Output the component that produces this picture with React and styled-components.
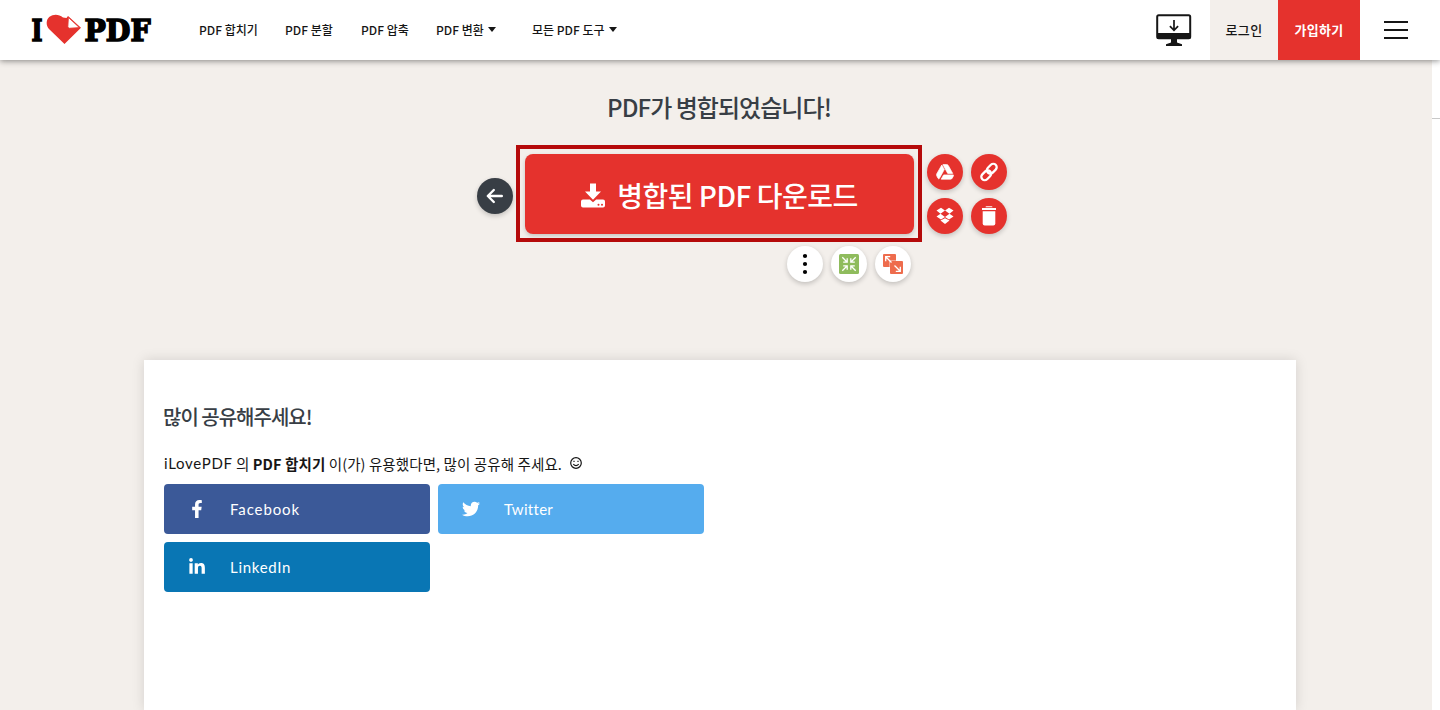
import styled, { createGlobalStyle } from "styled-components";
import { FaFacebookF, FaLinkedinIn, FaTwitter } from "react-icons/fa";

const GlobalStyle = createGlobalStyle`
  * {
    box-sizing: border-box;
  }
  body {
    margin: 0;
    background: #ffffff;
    color: #161616;
    font-family: "Noto Sans CJK KR", "Noto Sans", sans-serif;
    overflow: hidden;
  }
`;

const Page = styled.div`
  display: flex;
  flex-direction: column;
  height: 710px;
  overflow: hidden;
`;

const Header = styled.header`
  display: flex;
  align-items: center;
  flex: none;
  height: 60px;
  padding-left: 30px;
  background: #ffffff;
  box-shadow: 0 1px 6px rgba(0, 0, 0, 0.45);
  z-index: 2;
`;

const LogoSvg = styled.svg`
  flex: none;
  overflow: visible;
`;

const Nav = styled.nav`
  display: flex;
  margin-left: 43px;
`;

const NavItem = styled.a`
  display: flex;
  align-items: center;
  flex: none;
  width: ${(p) => p.$width}px;
  height: 60px;
  padding-bottom: 1px;
  font-size: 12px;
  font-weight: 500;
  white-space: nowrap;
`;

const Caret = styled.span`
  margin-left: 4px;
  border: 4.5px solid transparent;
  border-top: 5.5px solid #161616;
  border-bottom: 0;
`;

const HeaderActions = styled.div`
  display: flex;
  align-items: center;
  margin-left: auto;
`;

const AuthButton = styled.a`
  display: flex;
  align-items: center;
  justify-content: center;
  width: ${(p) => p.$width}px;
  height: 60px;
  padding-bottom: 1px;
  font-size: 13px;
  font-weight: ${(p) => (p.$primary ? 700 : 500)};
  letter-spacing: 0.3px;
  background: ${(p) => (p.$primary ? "#e5322d" : "#f3efeb")};
  color: ${(p) => (p.$primary ? "#ffffff" : "#161616")};
`;

const MenuButton = styled.div`
  display: flex;
  flex-direction: column;
  gap: 6px;
  margin: 0 32px 0 24px;
`;

const MenuLine = styled.span`
  width: 24px;
  height: 2px;
  background: #161616;
`;

const Body = styled.div`
  display: flex;
  flex: 1;
  min-height: 0;
`;

const Main = styled.main`
  display: flex;
  flex-direction: column;
  flex: 1;
  min-width: 0;
  background: #f3efeb;
`;

const SideStrip = styled.aside`
  flex: none;
  width: 8px;
  height: 59px;
  border-bottom: 1px solid #c8c8c8;
`;

const Title = styled.h1`
  margin: 27px 0 0;
  width: 1438px;
  height: 41px;
  line-height: 40px;
  font-size: 24px;
  font-weight: 500;
  letter-spacing: -0.95px;
  text-align: center;
  color: #383e45;
`;

const DownloadRow = styled.div`
  display: flex;
  margin: 17px 0 0 477px;
`;

const Circle = styled.span`
  display: flex;
  align-items: center;
  justify-content: center;
  flex: none;
  width: 36px;
  height: 36px;
  border-radius: 50%;
  background: ${(p) => p.$bg};
  color: #ffffff;
  box-shadow: 0 2px 5px rgba(0, 0, 0, 0.2);
`;

const BackSlot = styled.div`
  padding-top: 33px;
  margin-right: 3px;
`;

const Highlight = styled.div`
  width: 406px;
  height: 97px;
  padding: 5px;
  border: 4px solid #b50a0a;
`;

const DownloadButton = styled.a`
  display: flex;
  align-items: center;
  justify-content: center;
  gap: 12px;
  width: 389px;
  height: 80px;
  padding-top: 2px;
  border-radius: 8px;
  background: #e5322d;
  color: #ffffff;
  font-size: 28px;
  font-weight: 500;
  letter-spacing: -0.5px;
  white-space: nowrap;
  box-shadow: 0 2px 4px rgba(0, 0, 0, 0.18);
`;

const SaveOptions = styled.div`
  display: grid;
  grid-template-columns: 36px 36px;
  gap: 8px;
  align-content: start;
  margin: 9px 0 0 5px;
`;

const NextTools = styled.div`
  display: flex;
  gap: 8px;
  margin: 4px 0 0 787px;
`;

const SharePanel = styled.section`
  flex: 1;
  width: 1152px;
  margin: 78px 0 0 144px;
  padding: 41px 20px 0;
  background: #ffffff;
  box-shadow: 0 0 12px rgba(0, 0, 0, 0.13);
`;

const ShareTitle = styled.h2`
  margin: 0 0 0 -1px;
  height: 32px;
  line-height: 32px;
  font-size: 20px;
  font-weight: 500;
  letter-spacing: -1px;
  color: #383e45;
`;

const ShareText = styled.p`
  display: flex;
  align-items: center;
  margin: 18px 0 9px;
  height: 24px;
  font-size: 14.5px;
  letter-spacing: 0.1px;
  white-space: pre;

  svg {
    margin-left: 8px;
  }
`;

const Brand = styled.span`
  font-family: Lato, sans-serif;
  font-size: 15px;
  letter-spacing: 0.7px;
`;

const ShareGrid = styled.div`
  display: grid;
  grid-template-columns: 266px 266px;
  gap: 8px;
`;

const ShareButton = styled.a`
  display: flex;
  align-items: center;
  height: 50px;
  border-radius: 4px;
  background: ${(p) => p.$bg};
  color: #ffffff;
  font-family: Lato, sans-serif;
  font-size: 15px;
  letter-spacing: ${(p) => p.$spacing}px;
`;

const ShareIcon = styled.span`
  display: flex;
  justify-content: center;
  width: 66px;
`;

const Logo = () => (
  <LogoSvg width="126" height="34" viewBox="0 0 126 34">
    <g
      fontFamily="DejaVu Serif"
      fontWeight="700"
      fontSize="30"
      stroke="#000"
      strokeWidth="1.7"
    >
      <text x="1.500" y="27.500" textLength="11" lengthAdjust="spacingAndGlyphs">
        I
      </text>
      <text x="54.500" y="27.500" textLength="66" lengthAdjust="spacingAndGlyphs">
        PDF
      </text>
    </g>
    <path
      d="M34.500 31 19.500 16.500C15.500 12.500 16 6.500 19.500 3.700 23.500.8 29 1 33 4.500L36.500 5 38 3 51 14.800Z"
      fill="#e5322d"
    />
    <path
      d="M38.300 4.200 37.800 13.500Q37.700 15.300 39.500 15.300L49.500 14.700Z"
      fill="#fff"
      stroke="#e5322d"
      strokeWidth="1"
      strokeLinejoin="round"
    />
  </LogoSvg>
);

const DesktopSvg = styled.svg`
  margin-right: 18px;
`;

const DesktopIcon = () => (
  <DesktopSvg width="36" height="32" viewBox="0 0 36 32">
    <rect x="1.200" y="1.200" width="33" height="23" rx="1.500" fill="none" stroke="#161616" strokeWidth="2" />
    <path d="M1 19H34.500V23.500Q34.500 25 33 25H2.500Q1 25 1 23.500ZM15 25H21V28.500L26 30.200V32H10V30.200L15 28.500Z" fill="#161616" />
    <path d="M18 6V16.200M13.900 12.200 18 16.400 22.100 12.200" fill="none" stroke="#161616" strokeWidth="1.700" />
  </DesktopSvg>
);

const BackIcon = () => (
  <svg width="18" height="16" viewBox="0 0 18 16" fill="none" stroke="#fff" strokeWidth="2.400" strokeLinecap="round" strokeLinejoin="round">
    <path d="M15.800 8H2M7.800 2 1.800 8 7.800 14" />
  </svg>
);

const DownloadIcon = () => (
  <svg width="24" height="25" viewBox="0 0 24 25" fill="#fff">
    <path d="M9 .5H15V8.500H20L12 16.700 4 8.500H9Z" />
    <path d="M0 18.500Q0 16.500 2 16.500H8.800L12 19.300 15.200 16.500H22Q24 16.500 24 18.500V22.500Q24 24.500 22 24.500H2Q0 24.500 0 22.500Z" />
    <circle cx="17.500" cy="21.700" r="1" fill="#e5322d" />
    <circle cx="21" cy="21.700" r="1" fill="#e5322d" />
  </svg>
);

const DriveIcon = () => (
  <svg width="18" height="16" viewBox="0 0 18 16" fill="#fff" stroke="#fff" strokeWidth=".7" strokeLinejoin="round">
    <path d="M5.800 1 8.300 5.500 3.300 14.500Q2.600 15.200 2 14.300L.7 11.700Q.3 10.700.8 9.700Z" />
    <path d="M6.900.6H10.500Q11.800.6 12.300 1.500L16.700 9.400H11.700Z" />
    <path d="M7.600 10.900H17.400Q17.700 11.500 17.300 12.200L16.200 14.200Q15.700 15.200 14.500 15.200H5.200Z" />
  </svg>
);

const LinkIcon = () => (
  <svg width="20" height="20" viewBox="0 0 20 20" fill="none" stroke="#fff" strokeWidth="2.300">
    <rect x="7.300" y="3.300" width="11" height="6.800" rx="3.400" transform="rotate(-45 12.800 6.700)" />
    <rect x="1.700" y="9.900" width="11" height="6.800" rx="3.400" transform="rotate(-45 7.200 13.300)" />
  </svg>
);

const DropboxIcon = () => (
  <svg width="18" height="18" viewBox="0 0 18 18" fill="#fff">
    <path d="M5 .8 9 3.500 4.500 6.700.5 3.600ZM13 .8 17.500 3.600 13.500 6.700 9 3.500ZM4.500 6.700 9 10 5 12.500.5 9.600ZM13.500 6.700 17.500 9.600 13 12.500 9 10Z" />
    <path d="M4.500 13.500 9 11.200 13.500 13.500 9 17Z" />
  </svg>
);

const TrashIcon = () => (
  <svg width="16" height="20" viewBox="0 0 16 20" fill="#fff">
    <path d="M4.500 1.300Q4.500.3 5.500.3H10.500Q11.500.3 11.500 1.300ZM1 2H15V4H1Z" />
    <path d="M1.700 5.300H14.300V17.500Q14.300 19.500 12.300 19.500H3.700Q1.700 19.500 1.700 17.500Z" />
  </svg>
);

const MoreIcon = () => (
  <svg width="6" height="22" viewBox="0 0 6 22">
    <circle cx="3" cy="3" r="2.100" />
    <circle cx="3" cy="11" r="2.100" />
    <circle cx="3" cy="19" r="2.100" />
  </svg>
);

const CompressIcon = () => (
  <svg width="20" height="20" viewBox="0 0 20 20">
    <rect width="20" height="20" rx="1.500" fill="#8fbc5d" />
    <g fill="none" stroke="#fff" strokeWidth="1.300">
      <path d="M3.300 3.300 8 8M4.200 8.200H8.200V4.200" />
      <path d="M16.700 3.300 12 8M15.800 8.200H11.800V4.200" />
      <path d="M3.300 16.700 8 12M4.200 11.800H8.200V15.800" />
      <path d="M16.700 16.700 12 12M15.800 11.800H11.800V15.800" />
    </g>
  </svg>
);

const SplitIcon = () => (
  <svg width="20" height="20" viewBox="0 0 20 20">
    <path d="M1 0H12Q13 0 13 1V7H19Q20 7 20 8V19Q20 20 19 20H8Q7 20 7 19V13H1Q0 13 0 12V1Q0 0 1 0Z" fill="#ee6c4d" />
    <path d="M13 6.500H7.500Q6.500 6.500 6.500 7.500V13" fill="none" stroke="#fff" strokeWidth=".4" />
    <g fill="none" stroke="#fff" strokeWidth="1.300">
      <path d="M2.700 2.700 8.500 8.500M2.700 7.200V2.700H7.200" />
      <path d="M11.500 11.500 17.300 17.300M17.300 12.800V17.300H12.800" />
    </g>
  </svg>
);

const SmileIcon = () => (
  <svg width="12" height="12" viewBox="0 0 12 12" fill="none" stroke="#161616" strokeWidth="1.200">
    <circle cx="6" cy="6" r="5.300" />
    <path d="M3.300 7.200Q6 10 8.700 7.200" />
    <path d="M4 3.700V5M8 3.700V5" />
  </svg>
);

const navItems = [
  { label: "PDF 합치기", width: 86 },
  { label: "PDF 분할", width: 76 },
  { label: "PDF 압축", width: 75 },
  { label: "PDF 변환", width: 96, caret: true },
  { label: "모든 PDF 도구", width: 100, caret: true },
];

const networks = [
  { name: "Facebook", bg: "#3b5998", spacing: 0.9, icon: <FaFacebookF size={18} /> },
  { name: "Twitter", bg: "#55acee", spacing: 0.3, icon: <FaTwitter size={18} /> },
  { name: "LinkedIn", bg: "#0976b4", spacing: 0.7, icon: <FaLinkedinIn size={18} /> },
];

export default function App() {
  return (
    <Page>
      <GlobalStyle />
      <Header>
        <Logo />
        <Nav>
          {navItems.map((item) => (
            <NavItem key={item.label} $width={item.width}>
              {item.label}
              {item.caret && <Caret />}
            </NavItem>
          ))}
        </Nav>
        <HeaderActions>
          <DesktopIcon />
          <AuthButton $width={68}>로그인</AuthButton>
          <AuthButton $width={82} $primary>
            가입하기
          </AuthButton>
          <MenuButton>
            <MenuLine />
            <MenuLine />
            <MenuLine />
          </MenuButton>
        </HeaderActions>
      </Header>
      <Body>
        <Main>
          <Title>PDF가 병합되었습니다!</Title>
          <DownloadRow>
            <BackSlot>
              <Circle $bg="#383e45">
                <BackIcon />
              </Circle>
            </BackSlot>
            <Highlight>
              <DownloadButton>
                <DownloadIcon />
                병합된 PDF 다운로드
              </DownloadButton>
            </Highlight>
            <SaveOptions>
              <Circle $bg="#e5322d">
                <DriveIcon />
              </Circle>
              <Circle $bg="#e5322d">
                <LinkIcon />
              </Circle>
              <Circle $bg="#e5322d">
                <DropboxIcon />
              </Circle>
              <Circle $bg="#e5322d">
                <TrashIcon />
              </Circle>
            </SaveOptions>
          </DownloadRow>
          <NextTools>
            <Circle $bg="#ffffff">
              <MoreIcon />
            </Circle>
            <Circle $bg="#ffffff">
              <CompressIcon />
            </Circle>
            <Circle $bg="#ffffff">
              <SplitIcon />
            </Circle>
          </NextTools>
          <SharePanel>
            <ShareTitle>많이 공유해주세요!</ShareTitle>
            <ShareText>
              <Brand>iLovePDF</Brand> 의 <b>PDF 합치기</b> 이(가) 유용했다면, 많이 공유해 주세요.
              <SmileIcon />
            </ShareText>
            <ShareGrid>
              {networks.map((n) => (
                <ShareButton key={n.name} $bg={n.bg} $spacing={n.spacing}>
                  <ShareIcon>{n.icon}</ShareIcon>
                  {n.name}
                </ShareButton>
              ))}
            </ShareGrid>
          </SharePanel>
        </Main>
        <SideStrip />
      </Body>
    </Page>
  );
}
